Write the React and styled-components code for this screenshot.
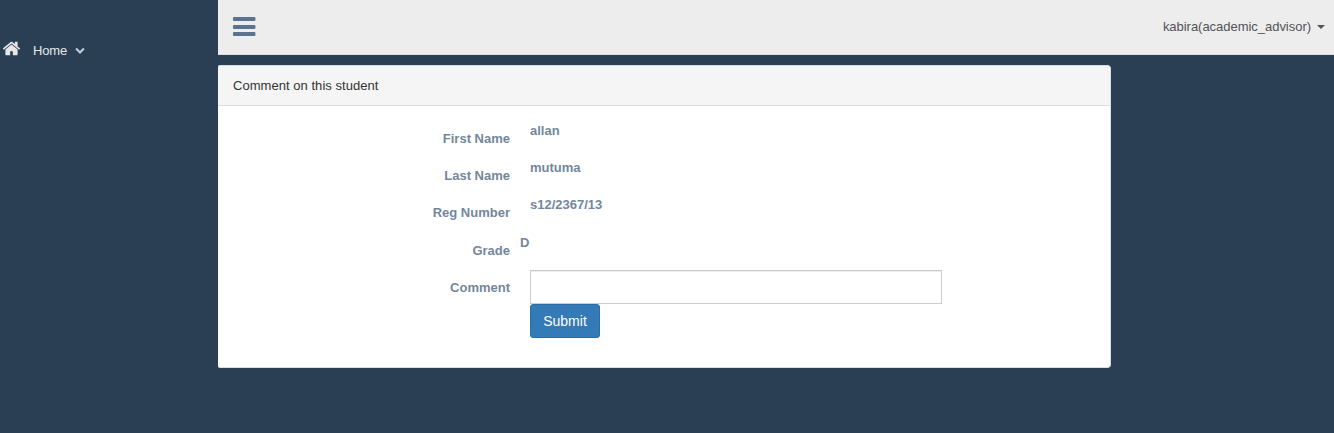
import React from 'react';
import styled, { createGlobalStyle } from 'styled-components';

const GlobalStyle = createGlobalStyle`
  *, *::before, *::after { box-sizing: border-box; }
  body {
    margin: 0;
    background: #2a3f54;
    color: #73879c;
    font: 400 13px/1.471 "Liberation Sans", Arial, sans-serif;
  }
`;

const Page = styled.div`
  display: flex;
  min-height: 433px;
`;

const Sidebar = styled.nav`
  flex: 0 0 218px;
  padding-top: 40px;
`;

const MenuLink = styled.a`
  display: flex;
  align-items: center;
  height: 22px;
  padding-left: 2px;
  color: #e7e7e7;
`;

const MenuText = styled.span`
  margin: 0 8px 0 12px;
  letter-spacing: -0.15px;
`;

const Icon = styled.svg`
  display: block;
  flex: none;
  width: ${(p) => p.$size}px;
  height: ${(p) => p.$size}px;
  fill: currentColor;
`;

const HomeIcon = styled(Icon)`
  margin-bottom: 6px;
`;

const ChevronIcon = styled(Icon)`
  margin-bottom: 2px;
  color: #c4cfda;
`;

const Main = styled.div`
  flex: 1;
  min-width: 0;
`;

const TopBar = styled.header`
  display: flex;
  align-items: center;
  justify-content: space-between;
  height: 55px;
  padding: 0 9px 0 13px;
  background: #ededed;
  border-bottom: 1px solid #d9dee4;
`;

const Toggle = styled.a`
  color: #5a738e;
`;

const User = styled.a`
  display: flex;
  align-items: center;
  gap: 6px;
  color: #515356;
  letter-spacing: -0.03px;
`;

const Caret = styled.span`
  border-top: 4px solid;
  border-left: 4px solid transparent;
  border-right: 4px solid transparent;
`;

const Panel = styled.section`
  width: 893px;
  height: 303px;
  margin-top: 10px;
  background: #fff;
  border: 1px solid #ddd;
  border-left: 0;
  border-radius: 2px 4px 4px 2px;
  overflow: hidden;
`;

const PanelHeading = styled.div`
  height: 40px;
  padding: 10px 15px;
  color: #333;
  letter-spacing: 0.04px;
  background: #f5f5f5;
  border-bottom: 1px solid #ddd;
`;

const Form = styled.form`
  padding: 15px 0 0;
`;

const Row = styled.div`
  display: grid;
  grid-template-columns: 292px 412px;
  column-gap: 20px;
  height: ${(p) => p.$height || 37}px;
  font-weight: 700;
`;

const Label = styled.label`
  padding-top: 8px;
  text-align: right;
`;

const Value = styled.span`
  margin-left: ${(p) => (p.$flush ? -10 : 0)}px;
`;

const Field = styled.div`
  display: flex;
  flex-direction: column;
  align-items: flex-start;
`;

const Input = styled.input`
  width: 100%;
  height: 34px;
  padding: 6px 12px;
  color: #555;
  font: 14px "Liberation Sans", Arial, sans-serif;
  background: #fff;
  border: 1px solid #ccc;
  border-radius: 0;
  box-shadow: inset 0 1px 1px rgba(0, 0, 0, 0.075);
  outline: 0;
`;

const Button = styled.button`
  width: 70px;
  height: 34px;
  padding: 0;
  color: #fff;
  font: 14px/20px "Liberation Sans", Arial, sans-serif;
  background: #337ab7;
  border: 1px solid #2e6da4;
  border-radius: 3px;
`;

const paths = {
  home: 'M1472 992v480q0 26-19 45t-45 19h-384v-384H768v384H384q-26 0-45-19t-19-45V992q0-1 .5-3t.5-3l575-474 575 474q1 2 1 6zm223-69l-62 74q-8 9-21 11h-3q-13 0-21-7L896 424 204 1001q-12 8-24 7-13-2-21-11l-62-74q-8-10-7-23.5T101 878l719-599q32-26 76-26t76 26l244 204V288q0-14 9-23t23-9h192q14 0 23 9t9 23v408l219 182q10 8 11 21.5t-7 23.5z',
  chevron: 'M1683 808l-742 741q-19 19-45 19t-45-19L109 808q-19-19-19-45.5t19-45.5l166-165q19-19 45-19t45 19l531 531 531-531q19-19 45-19t45 19l166 165q19 19 19 45.5t-19 45.5z',
};

const details = [
  { label: 'First Name', value: 'allan' },
  { label: 'Last Name', value: 'mutuma' },
  { label: 'Reg Number', value: 's12/2367/13', height: 38 },
  { label: 'Grade', value: 'D', flush: true },
];

export default function App() {
  return (
    <>
      <GlobalStyle />
      <Page>
        <Sidebar>
          <MenuLink>
            <HomeIcon $size={19} viewBox="0 0 1792 1792"><path d={paths.home} /></HomeIcon>
            <MenuText>Home</MenuText>
            <ChevronIcon $size={10} viewBox="0 0 1792 1792"><path d={paths.chevron} /></ChevronIcon>
          </MenuLink>
        </Sidebar>
        <Main>
          <TopBar>
            <Toggle>
              <Icon $size={26} viewBox="0 0 26 26">
                <rect x="2" y="3" width="22.4" height="4" rx="0.8" />
                <rect x="2" y="11" width="22.4" height="4" rx="0.8" />
                <rect x="2" y="18" width="22.4" height="4" rx="0.8" />
              </Icon>
            </Toggle>
            <User>
              kabira(academic_advisor)
              <Caret />
            </User>
          </TopBar>
          <Panel>
            <PanelHeading>Comment on this student</PanelHeading>
            <Form onSubmit={(e) => e.preventDefault()}>
              {details.map((d) => (
                <Row key={d.label} $height={d.height}>
                  <Label>{d.label}</Label>
                  <Value $flush={d.flush}>{d.value}</Value>
                </Row>
              ))}
              <Row $height={68}>
                <Label htmlFor="comment">Comment</Label>
                <Field>
                  <Input id="comment" type="text" />
                  <Button type="submit">Submit</Button>
                </Field>
              </Row>
            </Form>
          </Panel>
        </Main>
      </Page>
    </>
  );
}
